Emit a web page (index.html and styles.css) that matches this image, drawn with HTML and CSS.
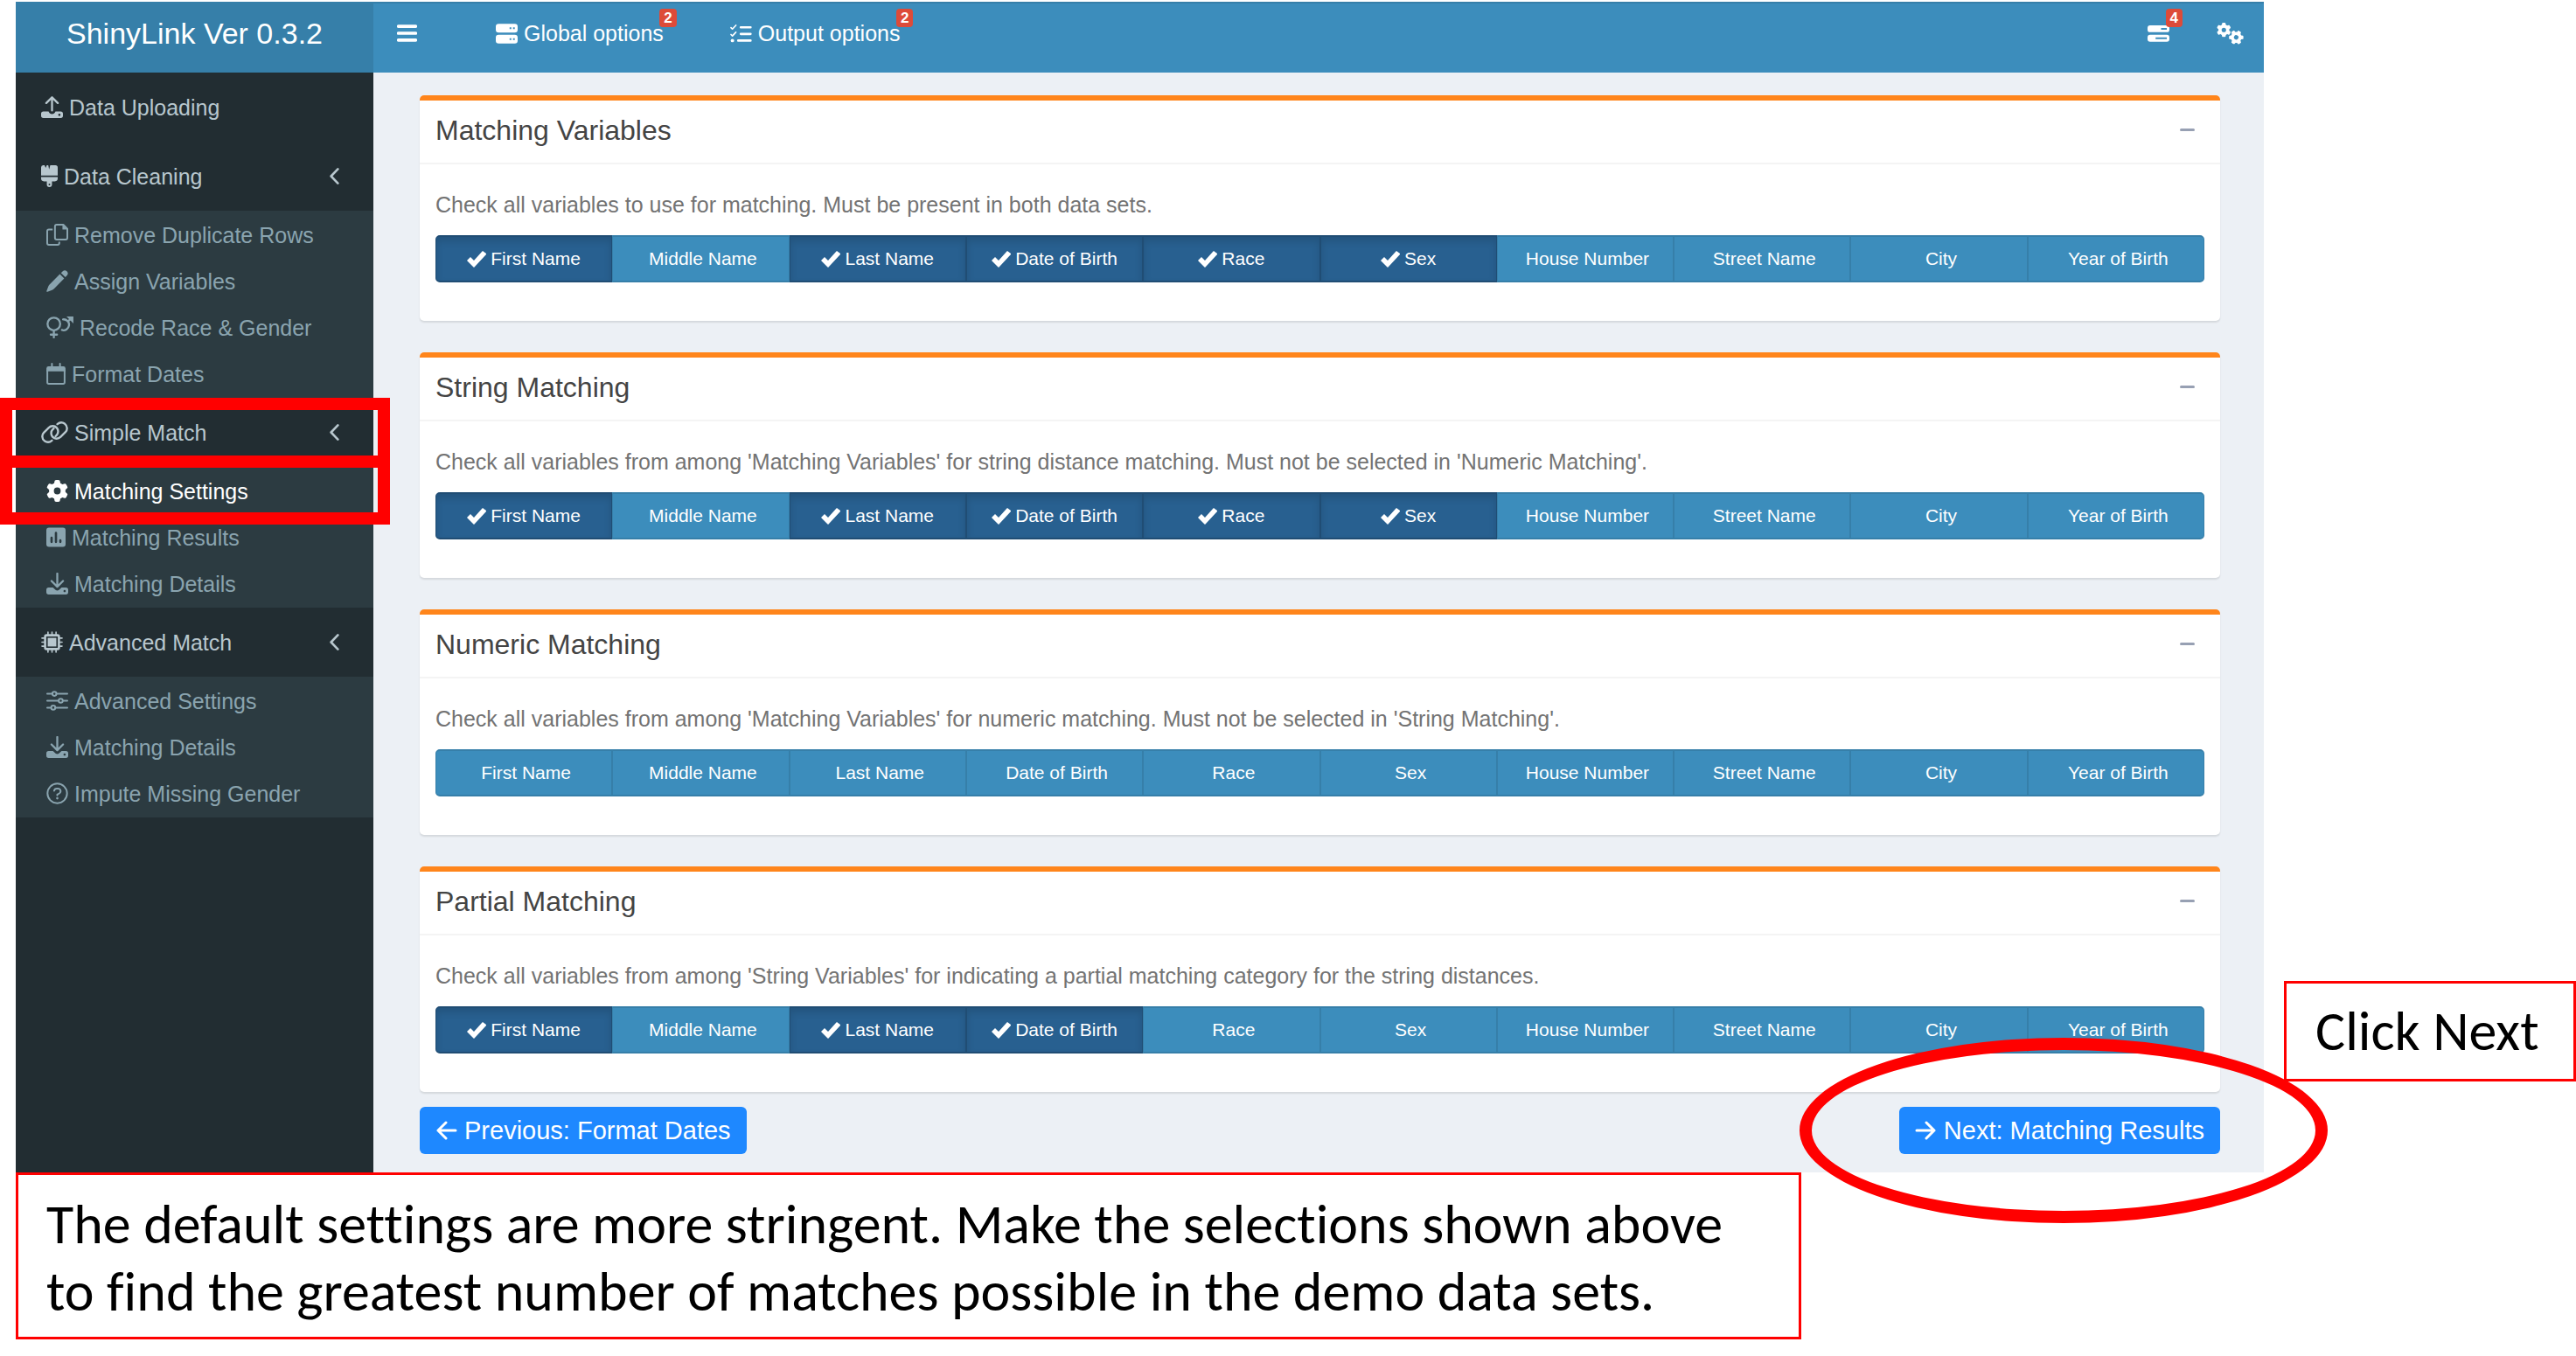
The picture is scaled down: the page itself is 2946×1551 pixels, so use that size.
FILE: index.html
```html
<!DOCTYPE html>
<html lang="en">
<head>
<meta charset="utf-8">
<title>ShinyLink Ver 0.3.2</title>
<link rel="stylesheet" href="styles.css">
</head>
<body>
<svg class="sprite" aria-hidden="true">
  <symbol id="i-upload" viewBox="0 0 76 76"><path d="M38 50V5M18 24L38 4l20 20" fill="none" stroke="currentColor" stroke-width="7" stroke-linecap="round" stroke-linejoin="round"/><path fill-rule="evenodd" d="M8 53h18c2 6 7 9 12 9s10-3 12-9h18a8 8 0 0 1 8 8v7a8 8 0 0 1-8 8H8a8 8 0 0 1-8-8v-7a8 8 0 0 1 8-8zm55 8a4 4 0 1 0 1 0z"/></symbol>
  <symbol id="i-download" viewBox="0 0 76 76"><path d="M38 3v44M18 29l20 20 20-20" fill="none" stroke="currentColor" stroke-width="7" stroke-linecap="round" stroke-linejoin="round"/><path fill-rule="evenodd" d="M8 52h15l10 9c3 2 7 2 10 0l10-9h15a8 8 0 0 1 8 8v8a8 8 0 0 1-8 8H8a8 8 0 0 1-8-8v-8a8 8 0 0 1 8-8zm55 8a4 4 0 1 0 1 0z"/></symbol>
  <symbol id="i-brush" viewBox="0 0 58 76"><path d="M7 0h5l4 9 4-9h5l3 14 4-14h18a8 8 0 0 1 8 8v28H0V8a8 8 0 0 1 7-8zM0 41h58v5a10 10 0 0 1-10 10H38v11a9 9 0 0 1-18 0V56H10A10 10 0 0 1 0 46z"/><circle class="cut" cx="29" cy="67" r="3"/></symbol>
  <symbol id="i-copy" viewBox="0 0 76 76"><g fill="none" stroke="currentColor" stroke-width="6" stroke-linejoin="round"><path d="M36 3h23l14 14v32a6 6 0 0 1-6 6H36a6 6 0 0 1-6-6V9a6 6 0 0 1 6-6z"/><path d="M22 20H9a6 6 0 0 0-6 6v41a6 6 0 0 0 6 6h30a6 6 0 0 0 6-6v-5"/></g><path d="M56 2l18 18H56z"/></symbol>
  <symbol id="i-pencil" viewBox="0 0 76 76"><path d="M57 4c5-5 10-4 14 0s6 9 1 14l-6 6-15-14zM47 14l15 15-36 36c-2 2-4 3-6 4L4 75c-3 1-4 0-3-3l6-16c1-2 2-4 4-6z"/></symbol>
  <symbol id="i-genders" viewBox="0 0 94 76"><g fill="none" stroke="currentColor" stroke-width="7" stroke-linecap="round"><circle cx="26" cy="26" r="22"/><path d="M26 50v23M15 63h22M58 10a19 19 0 1 1-4 37M75 17l10-9"/></g><path d="M70 0h24v24z"/></symbol>
  <symbol id="i-calendar" viewBox="0 0 66 76"><path d="M7 12h52a7 7 0 0 1 7 7v11H0V19a7 7 0 0 1 7-7z"/><path d="M19 3v10M47 3v10M3 25v43a5 5 0 0 0 5 5h50a5 5 0 0 0 5-5V25" fill="none" stroke="currentColor" stroke-width="6" stroke-linecap="round"/></symbol>
  <symbol id="i-link" viewBox="0 0 90 70"><g fill="none" stroke="currentColor" stroke-width="7" stroke-linecap="round"><path d="M36 62c-8 7-18 6-25 1C2 56 2 43 9 36l16-16c8-8 20-8 27 0 6 7 6 18 0 24l-4 4"/><path d="M54 8c8-7 18-6 25-1 9 7 9 20 2 27L65 50c-8 8-20 8-27 0-6-7-6-18 0-24l4-4"/></g></symbol>
  <symbol id="i-gear" viewBox="0 0 512 512"><path d="M495.900 166.600c3.200 8.700 .5 18.400-6.400 24.600l-43.300 39.400c1.100 8.300 1.700 16.800 1.700 25.400s-.6 17.100-1.700 25.400l43.300 39.400c6.900 6.200 9.600 15.900 6.400 24.600c-4.400 11.900-9.700 23.300-15.800 34.300l-4.700 8.100c-6.600 11-14 21.400-22.100 31.200c-5.900 7.200-15.700 9.600-24.500 6.800l-55.700-17.700c-13.400 10.300-28.200 18.900-44 25.400l-12.500 57.100c-2 9.100-9 16.300-18.200 17.800c-13.800 2.300-28 3.500-42.500 3.500s-28.700-1.200-42.500-3.500c-9.200-1.500-16.200-8.700-18.200-17.800l-12.500-57.100c-15.800-6.500-30.600-15.100-44-25.400L83.100 425.900c-8.800 2.800-18.600 .3-24.500-6.800c-8.100-9.800-15.500-20.200-22.100-31.200l-4.700-8.100c-6.100-11-11.400-22.400-15.800-34.300c-3.200-8.700-.5-18.400 6.400-24.600l43.300-39.400C64.600 273.100 64 264.600 64 256s.6-17.100 1.700-25.400L22.400 191.200c-6.900-6.200-9.600-15.900-6.400-24.600c4.400-11.900 9.700-23.300 15.800-34.300l4.700-8.100c6.600-11 14-21.400 22.100-31.200c5.900-7.200 15.700-9.600 24.500-6.800l55.700 17.700c13.400-10.300 28.200-18.900 44-25.400l12.500-57.100c2-9.100 9-16.300 18.200-17.800C227.300 1.200 241.500 0 256 0s28.700 1.200 42.500 3.500c9.200 1.500 16.200 8.700 18.200 17.800l12.500 57.100c15.800 6.500 30.600 15.100 44 25.400l55.700-17.700c8.800-2.800 18.600-.3 24.500 6.800c8.100 9.800 15.500 20.200 22.100 31.200l4.700 8.100c6.100 11 11.400 22.400 15.800 34.300zM256 336a80 80 0 1 0 0-160 80 80 0 1 0 0 160z"/></symbol>
  <symbol id="i-gears" viewBox="0 0 94 76"><use href="#i-gear" x="0" y="0" width="50" height="50"/><g transform="rotate(30 68 51)"><use href="#i-gear" x="43" y="26" width="50" height="50"/></g></symbol>
  <symbol id="i-chart" viewBox="0 0 66 66"><path fill-rule="evenodd" d="M9 0h48a9 9 0 0 1 9 9v48a9 9 0 0 1-9 9H9a9 9 0 0 1-9-9V9a9 9 0 0 1 9-9zm5 35v14a4 4 0 0 0 8 0V35a4 4 0 0 0-8 0zm15-17v31a4 4 0 0 0 8 0V18a4 4 0 0 0-8 0zm15 26v5a4 4 0 0 0 8 0v-5a4 4 0 0 0-8 0z"/></symbol>
  <symbol id="i-chip" viewBox="0 0 76 76"><g fill="none" stroke="currentColor"><rect x="14" y="14" width="48" height="48" rx="5" stroke-width="8"/><path stroke-width="5" stroke-linecap="round" d="M24 3v9M38 3v9M52 3v9M24 64v9M38 64v9M52 64v9M3 24h9M3 38h9M3 52h9M64 24h9M64 38h9M64 52h9"/></g><path d="M23 23h30v30H23z"/></symbol>
  <symbol id="i-sliders" viewBox="0 0 76 70"><g fill="none" stroke="currentColor" stroke-width="6" stroke-linecap="round"><path d="M3 11h17M36 11h37M3 35h39M58 35h15M3 59h13M32 59h41"/><circle cx="28" cy="11" r="7"/><circle cx="50" cy="35" r="7"/><circle cx="24" cy="59" r="7"/></g></symbol>
  <symbol id="i-help" viewBox="0 0 76 76"><g fill="none" stroke="currentColor" stroke-width="6" stroke-linecap="round" stroke-linejoin="round"><circle cx="38" cy="38" r="34"/><path d="M27 29c1-5 4-8 9-8h4c10 0 13 12 5 17l-7 4v3"/></g><circle cx="38" cy="55" r="4"/></symbol>
  <symbol id="i-chevron" viewBox="0 0 34 58"><path d="M29 4L5 29l24 25" fill="none" stroke="currentColor" stroke-width="8" stroke-linecap="round" stroke-linejoin="round"/></symbol>
  <symbol id="i-bars" viewBox="0 0 70 60"><path d="M5 6h60M5 30h60M5 54h60" stroke="currentColor" stroke-width="11" stroke-linecap="round"/></symbol>
  <symbol id="i-server" viewBox="0 0 76 68"><path fill-rule="evenodd" d="M10 0h56a10 10 0 0 1 10 10v10a10 10 0 0 1-10 10H10A10 10 0 0 1 0 20V10A10 10 0 0 1 10 0zm38 12v6h6v-6zm12 0v6h6v-6zM10 38h56a10 10 0 0 1 10 10v10a10 10 0 0 1-10 10H10A10 10 0 0 1 0 58V48a10 10 0 0 1 10-10zm38 12v6h6v-6zm12 0v6h6v-6z"/></symbol>
  <symbol id="i-tasks" viewBox="0 0 76 58"><path fill-rule="evenodd" d="M9 0h58a9 9 0 0 1 9 9v6a9 9 0 0 1-9 9H9a9 9 0 0 1-9-9V9a9 9 0 0 1 9-9zm38 9v6h20V9zM9 33h58a9 9 0 0 1 9 9v6a9 9 0 0 1-9 9H9a9 9 0 0 1-9-9v-6a9 9 0 0 1 9-9zm19 9v6h39v-6z"/></symbol>
  <symbol id="i-checklist" viewBox="0 0 76 64"><g fill="none" stroke="currentColor" stroke-linecap="round" stroke-linejoin="round"><path stroke-width="5" d="M3 11l5 5L20 3M3 35l5 5 12-13"/><path stroke-width="8" d="M37 10h34M37 33h34M28 56h43"/></g><circle cx="8" cy="56" r="6"/></symbol>
  <symbol id="i-check" viewBox="0 0 22 19"><path d="M0 11l4-4 4 4L17 1l1-1 4 3v1L9 18l-1 1-1-1z"/></symbol>
  <symbol id="i-left" viewBox="0 0 25 22"><path d="M23 11H3M12 2l-9 9 9 9" fill="none" stroke="currentColor" stroke-width="3" stroke-linecap="round" stroke-linejoin="round"/></symbol>
  <symbol id="i-right" viewBox="0 0 25 22"><path d="M2 11h20M13 2l9 9-9 9" fill="none" stroke="currentColor" stroke-width="3" stroke-linecap="round" stroke-linejoin="round"/></symbol>
</svg>

<div class="page">
  <div class="app">
    <header class="topbar">
      <a class="logo" href="#">ShinyLink Ver 0.3.2</a>
      <nav class="navbar">
        <button class="nav-toggle" type="button" aria-label="Toggle navigation"><svg class="bars"><use href="#i-bars"/></svg></button>
        <a class="nav-link" href="#"><svg class="w25"><use href="#i-server"/></svg>Global options<span class="badge">2</span></a>
        <a class="nav-link" href="#"><svg class="w25"><use href="#i-checklist"/></svg>Output options<span class="badge">2</span></a>
        <div class="nav-right">
          <a class="nav-link" href="#" aria-label="Tasks"><svg class="w25"><use href="#i-tasks"/></svg><span class="badge">4</span></a>
          <a class="nav-link" href="#" aria-label="Settings"><svg class="w31"><use href="#i-gears"/></svg></a>
        </div>
      </nav>
    </header>

    <div class="body">
      <aside class="sidebar">
        <ul class="menu">
          <li><a class="menu-head" href="#"><svg class="w25"><use href="#i-upload"/></svg>Data Uploading</a></li>
          <li>
            <a class="menu-head" href="#"><svg class="w19"><use href="#i-brush"/></svg>Data Cleaning<svg class="chevron"><use href="#i-chevron"/></svg></a>
            <ul class="submenu">
              <li><a href="#"><svg class="w25"><use href="#i-copy"/></svg>Remove Duplicate Rows</a></li>
              <li><a href="#"><svg class="w25"><use href="#i-pencil"/></svg>Assign Variables</a></li>
              <li><a href="#"><svg class="w31"><use href="#i-genders"/></svg>Recode Race &amp; Gender</a></li>
              <li><a href="#"><svg class="w22"><use href="#i-calendar"/></svg>Format Dates</a></li>
            </ul>
          </li>
          <li>
            <div class="marked marked-head"><a class="menu-head" href="#"><svg class="w31"><use href="#i-link"/></svg>Simple Match<svg class="chevron"><use href="#i-chevron"/></svg></a></div>
            <ul class="submenu">
              <li class="marked marked-item"><a class="active" href="#"><svg class="w25"><use href="#i-gear"/></svg>Matching Settings</a></li>
              <li><a href="#"><svg class="w22"><use href="#i-chart"/></svg>Matching Results</a></li>
              <li><a href="#"><svg class="w25"><use href="#i-download"/></svg>Matching Details</a></li>
            </ul>
          </li>
          <li>
            <a class="menu-head" href="#"><svg class="w25"><use href="#i-chip"/></svg>Advanced Match<svg class="chevron"><use href="#i-chevron"/></svg></a>
            <ul class="submenu">
              <li><a href="#"><svg class="w25"><use href="#i-sliders"/></svg>Advanced Settings</a></li>
              <li><a href="#"><svg class="w25"><use href="#i-download"/></svg>Matching Details</a></li>
              <li><a href="#"><svg class="w25"><use href="#i-help"/></svg>Impute Missing Gender</a></li>
            </ul>
          </li>
        </ul>
      </aside>

      <main class="content">
        <section class="box">
          <div class="box-header"><h3>Matching Variables</h3><button class="collapse" type="button" aria-label="Collapse"></button></div>
          <fieldset class="box-body">
            <legend>Check all variables to use for matching. Must be present in both data sets.</legend>
            <div class="choices">
              <label><input type="checkbox" checked><svg><use href="#i-check"/></svg>First Name</label>
              <label><input type="checkbox"><svg><use href="#i-check"/></svg>Middle Name</label>
              <label><input type="checkbox" checked><svg><use href="#i-check"/></svg>Last Name</label>
              <label><input type="checkbox" checked><svg><use href="#i-check"/></svg>Date of Birth</label>
              <label><input type="checkbox" checked><svg><use href="#i-check"/></svg>Race</label>
              <label><input type="checkbox" checked><svg><use href="#i-check"/></svg>Sex</label>
              <label><input type="checkbox"><svg><use href="#i-check"/></svg>House Number</label>
              <label><input type="checkbox"><svg><use href="#i-check"/></svg>Street Name</label>
              <label><input type="checkbox"><svg><use href="#i-check"/></svg>City</label>
              <label><input type="checkbox"><svg><use href="#i-check"/></svg>Year of Birth</label>
            </div>
          </fieldset>
        </section>

        <section class="box">
          <div class="box-header"><h3>String Matching</h3><button class="collapse" type="button" aria-label="Collapse"></button></div>
          <fieldset class="box-body">
            <legend>Check all variables from among 'Matching Variables' for string distance matching. Must not be selected in 'Numeric Matching'.</legend>
            <div class="choices">
              <label><input type="checkbox" checked><svg><use href="#i-check"/></svg>First Name</label>
              <label><input type="checkbox"><svg><use href="#i-check"/></svg>Middle Name</label>
              <label><input type="checkbox" checked><svg><use href="#i-check"/></svg>Last Name</label>
              <label><input type="checkbox" checked><svg><use href="#i-check"/></svg>Date of Birth</label>
              <label><input type="checkbox" checked><svg><use href="#i-check"/></svg>Race</label>
              <label><input type="checkbox" checked><svg><use href="#i-check"/></svg>Sex</label>
              <label><input type="checkbox"><svg><use href="#i-check"/></svg>House Number</label>
              <label><input type="checkbox"><svg><use href="#i-check"/></svg>Street Name</label>
              <label><input type="checkbox"><svg><use href="#i-check"/></svg>City</label>
              <label><input type="checkbox"><svg><use href="#i-check"/></svg>Year of Birth</label>
            </div>
          </fieldset>
        </section>

        <section class="box">
          <div class="box-header"><h3>Numeric Matching</h3><button class="collapse" type="button" aria-label="Collapse"></button></div>
          <fieldset class="box-body">
            <legend>Check all variables from among 'Matching Variables' for numeric matching. Must not be selected in 'String Matching'.</legend>
            <div class="choices">
              <label><input type="checkbox"><svg><use href="#i-check"/></svg>First Name</label>
              <label><input type="checkbox"><svg><use href="#i-check"/></svg>Middle Name</label>
              <label><input type="checkbox"><svg><use href="#i-check"/></svg>Last Name</label>
              <label><input type="checkbox"><svg><use href="#i-check"/></svg>Date of Birth</label>
              <label><input type="checkbox"><svg><use href="#i-check"/></svg>Race</label>
              <label><input type="checkbox"><svg><use href="#i-check"/></svg>Sex</label>
              <label><input type="checkbox"><svg><use href="#i-check"/></svg>House Number</label>
              <label><input type="checkbox"><svg><use href="#i-check"/></svg>Street Name</label>
              <label><input type="checkbox"><svg><use href="#i-check"/></svg>City</label>
              <label><input type="checkbox"><svg><use href="#i-check"/></svg>Year of Birth</label>
            </div>
          </fieldset>
        </section>

        <section class="box">
          <div class="box-header"><h3>Partial Matching</h3><button class="collapse" type="button" aria-label="Collapse"></button></div>
          <fieldset class="box-body">
            <legend>Check all variables from among 'String Variables' for indicating a partial matching category for the string distances.</legend>
            <div class="choices">
              <label><input type="checkbox" checked><svg><use href="#i-check"/></svg>First Name</label>
              <label><input type="checkbox"><svg><use href="#i-check"/></svg>Middle Name</label>
              <label><input type="checkbox" checked><svg><use href="#i-check"/></svg>Last Name</label>
              <label><input type="checkbox" checked><svg><use href="#i-check"/></svg>Date of Birth</label>
              <label><input type="checkbox"><svg><use href="#i-check"/></svg>Race</label>
              <label><input type="checkbox"><svg><use href="#i-check"/></svg>Sex</label>
              <label><input type="checkbox"><svg><use href="#i-check"/></svg>House Number</label>
              <label><input type="checkbox"><svg><use href="#i-check"/></svg>Street Name</label>
              <label><input type="checkbox"><svg><use href="#i-check"/></svg>City</label>
              <label><input type="checkbox"><svg><use href="#i-check"/></svg>Year of Birth</label>
            </div>
          </fieldset>
        </section>

        <div class="pager">
          <button class="step" type="button"><svg><use href="#i-left"/></svg>Previous: Format Dates</button>
          <div class="circled"><button class="step" type="button"><svg><use href="#i-right"/></svg>Next: Matching Results</button></div>
        </div>
      </main>
    </div>
  </div>

  <p class="note note-side">Click Next</p>
  <p class="note note-bottom">The default settings are more stringent. Make the selections shown above<br>to find the greatest number of matches possible in the demo data sets.</p>
</div>
</body>
</html>
```
FILE: styles.css
```css
* { box-sizing: border-box; }

body {
  margin: 0;
  background: #fff;
  color: #333;
  font: 25px/36px "Liberation Sans", Arial, sans-serif;
}

a { color: inherit; text-decoration: none; }
ul { margin: 0; padding: 0; list-style: none; }
svg { flex: none; fill: currentColor; overflow: visible; }
button { border: 0; font: inherit; cursor: pointer; }
.sprite { position: absolute; width: 0; height: 0; }
.cut { fill: #222d32; }

.w19 { width: 19px; height: 25px; }
.w22 { width: 22px; height: 25px; }
.w25 { width: 25px; height: 25px; }
.w31 { width: 31px; height: 25px; }

.page {
  display: grid;
  grid-template-columns: minmax(0, 1fr) 334px;
  column-gap: 23px;
  padding: 2px 0 18px 18px;
}

/* Top bar */
.topbar { display: flex; height: 81px; color: #fff; }
.logo {
  width: 409px;
  padding-top: 18px;
  background: #367fa9;
  font-size: 34px;
  text-align: center;
}
.navbar {
  display: flex;
  flex: 1;
  align-items: flex-start;
  padding: 18px 23px 0 27px;
  background: #3c8dbc;
  box-shadow: inset 0 2px #367fa9;
}
.nav-toggle { display: flex; padding: 8px 0; margin-right: 90px; background: none; color: inherit; }
.bars { width: 23px; height: 20px; }
.nav-link { position: relative; display: flex; align-items: center; gap: 7px; height: 36px; margin-right: 76px; }
.nav-right { display: flex; margin-left: auto; }
.nav-right .nav-link { margin-right: 54px; }
.nav-right .nav-link:last-child { margin-right: 0; }
.badge {
  position: absolute;
  top: -10px;
  right: -15px;
  padding: 0 5px;
  border-radius: 4px;
  background: #dd4b39;
  font-size: 17px;
  font-weight: bold;
  line-height: 21px;
}

/* Sidebar */
.body { display: flex; }
.sidebar { width: 409px; background: #222d32; color: #b8c7ce; }
.menu-head { display: flex; align-items: center; gap: 7px; height: 79px; padding: 0 39px 0 29px; }
.chevron { width: 11px; height: 19px; margin-left: auto; }
.submenu { padding: 1px 0; background: #2c3b41; color: #8aa4af; }
.submenu a { display: flex; align-items: center; gap: 7px; height: 53px; padding-left: 35px; }
.submenu .active { color: #fff; }

/* Red frames laid over the highlighted menu rows */
.marked { position: relative; }
.marked::after {
  content: "";
  position: absolute;
  right: -19px;
  left: -18px;
  border: 14px solid #f00;
  pointer-events: none;
}
.marked-head::after { top: 0; bottom: -1px; }
.marked-item::after { top: -14px; bottom: -12px; }

/* Content */
.content { flex: 1; padding: 26px 50px 21px 53px; background: #ecf0f5; }
.box {
  margin-bottom: 36px;
  border-top: 6px solid #ff851b;
  border-radius: 5px;
  background: #fff;
  box-shadow: 0 2px 2px rgba(0, 0, 0, .1);
}
.box:last-of-type { margin-bottom: 17px; }
.box-header {
  display: flex;
  align-items: center;
  justify-content: space-between;
  height: 73px;
  padding: 0 29px 4px 18px;
  border-bottom: 2px solid #f4f4f4;
}
h3 { margin: 0; color: #444; font-size: 32px; font-weight: normal; }
.collapse { width: 17px; height: 3px; padding: 0; border-radius: 2px; background: #97a0b3; }
.box-body { min-width: 0; margin: 0; padding: 28px 18px 44px; border: 0; }
legend { float: left; width: 100%; margin-bottom: 17px; padding: 0; color: #737373; }
.choices { clear: both; display: grid; grid-template-columns: repeat(10, minmax(0, 1fr)); }
.choices label {
  position: relative;
  display: flex;
  align-items: center;
  justify-content: center;
  gap: 5px;
  height: 54px;
  padding-left: 5px;
  border: 2px solid #367fa9;
  border-left-width: 1px;
  border-right-width: 1px;
  background: #3c8dbc;
  color: #fff;
  font-size: 21px;
  cursor: pointer;
}
.choices label:first-child { border-radius: 5px 0 0 5px; }
.choices label:last-child { border-radius: 0 5px 5px 0; }
.choices input { position: absolute; opacity: 0; }
.choices svg { display: none; width: 22px; height: 19px; }
.choices label:has(:checked) {
  padding-left: 0;
  border-color: #204d74;
  background: #286090;
  box-shadow: inset 0 5px 9px rgba(0, 0, 0, .125);
}
.choices :checked + svg { display: block; }

.pager { display: flex; justify-content: space-between; }
.step {
  display: flex;
  align-items: center;
  gap: 8px;
  height: 54px;
  padding: 0 18px;
  border-radius: 6px;
  background: #1e88ff;
  color: #fff;
  font-size: 29px;
}
.step svg { width: 25px; height: 22px; }
.circled { position: relative; }
.circled::after {
  content: "";
  position: absolute;
  inset: -79px -123px -79px -114px;
  border: 14px solid #f00;
  border-radius: 50%;
  pointer-events: none;
}

/* Instruction notes */
.note {
  margin: 0;
  border: 3px solid #f00;
  background: #fff;
  color: #000;
  font: 64px/77px Carlito, Calibri, Lato, sans-serif;
  font-variant-ligatures: none;
}
.note-side { align-self: end; margin-bottom: 104px; padding: 16px 0 16px 33px; }
.note-bottom { grid-column: 1; justify-self: start; padding: 18px 87px 13px 32px; white-space: nowrap; }
```
